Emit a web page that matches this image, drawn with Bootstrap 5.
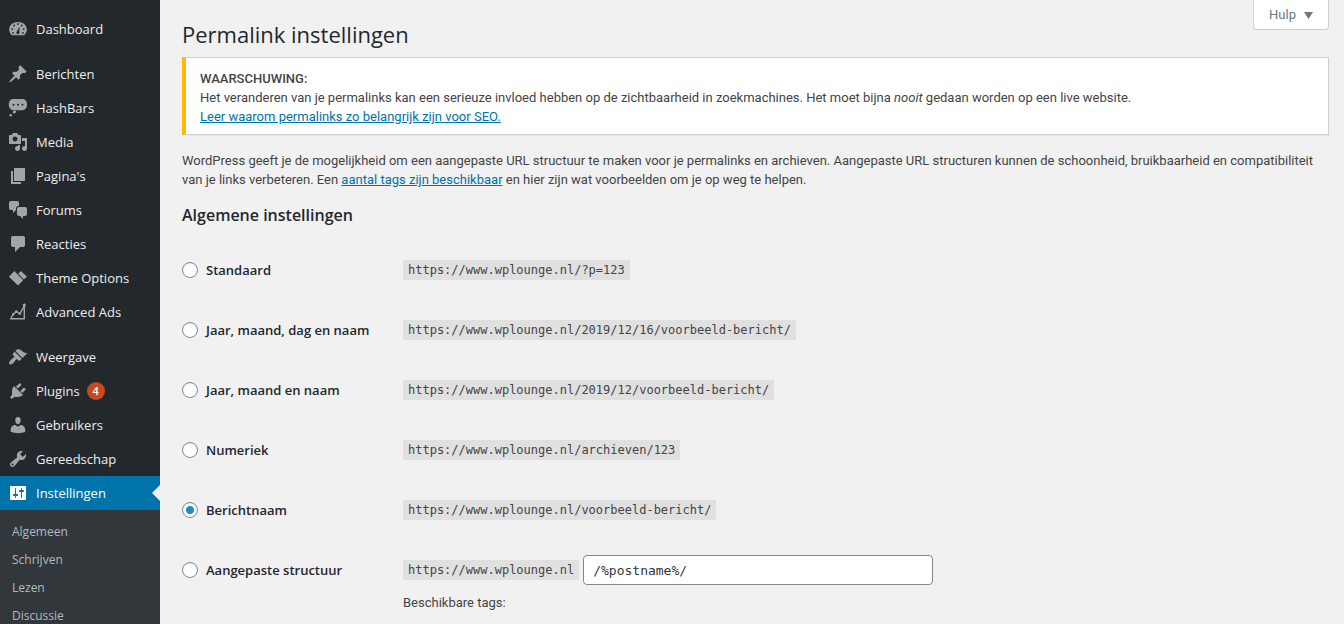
<!DOCTYPE html>
<html lang="nl">
<head>
<meta charset="utf-8">
<meta name="viewport" content="width=device-width, initial-scale=1">
<title>Permalink instellingen</title>
<link href="https://cdn.jsdelivr.net/npm/bootstrap@5.3.0/dist/css/bootstrap.min.css" rel="stylesheet">
<style>
  body { background: #f1f1f1; color: #444; font: 400 13px/19px Roboto, "Open Sans", sans-serif; }
  a { color: #0073aa; }
  .page-shell { height: 100vh; overflow: hidden; }

  /* Admin menu */
  .admin-menu { width: 160px; flex: none; background: #23282d; padding-top: 12px; font-family: "Open Sans", sans-serif; }
  .admin-menu .nav-link { display: flex; align-items: center; gap: 8px; height: 34px; padding: 0 8px; color: #eee; font-size: 13px; line-height: 18px; }
  .admin-menu svg { width: 20px; height: 20px; flex: none; fill: #a0a5aa; }
  .admin-menu .group-start { margin-top: 11px; }
  .admin-menu .nav-link.active { position: relative; background: #0073aa; color: #fff; }
  .admin-menu .active svg { fill: #fff; }
  .admin-menu .active::after { content: ""; position: absolute; right: 0; top: 9px; border: 8px solid transparent; border-right-color: #f1f1f1; border-left: 0; }
  .update-count { background: #ca4a1f; color: #fff; width: 18px; height: 18px; padding: 0; font: 600 11px/18px "Open Sans", sans-serif; margin-left: -1px; }
  .sub-menu { background: #32373c; padding: 8px 0 7px; }
  .admin-menu .sub-menu .nav-link { height: 28px; padding: 0 12px; color: #b4b9be; font-size: 12px; }

  /* Content */
  .admin-content { padding: 0 15px 0 22px; min-width: 0; }
  .help-toggle { background: #fff; border: 1px solid #ccd0d4; border-top: 0; border-radius: 0 0 4px 4px; color: #72777c; height: 30px; padding: 0 15px; }
  .help-toggle svg { width: 9px; height: 8px; fill: #72777c; }
  h1 { font: 400 22px/30px "Open Sans", sans-serif; color: #23282d; padding-top: 19px; }
  h2 { font: 600 16px/22px "Open Sans", sans-serif; color: #23282d; margin: 15px 0 14px; }
  .warning-notice { background: #fff; border: 1px solid #ccd0d4; border-left: 4px solid #ffb900; box-shadow: 0 1px 1px rgba(0,0,0,.04); padding: 11px 14px 8px; margin: 8px 0 16px; }
  .setting-row { min-height: 60px; }
  .setting-name { width: 221px; flex: none; padding-top: 20px; }
  .setting-name label { font: 600 13px/20px "Open Sans", sans-serif; color: #23282d; }
  .setting-name .form-check-input { width: 16px; height: 16px; margin: 2px 0 0; border-color: #7e8993; background-color: #fff; box-shadow: inset 0 1px 2px rgba(0,0,0,.1); }
  .setting-name .form-check-input:checked { background: #fff radial-gradient(circle, #1e8cbe 3.5px, transparent 4.5px); }
  .setting-value { padding-top: 20px; }
  .url-code { background: #e0e0e0; color: #444; font: 12px/19px "DejaVu Sans Mono", monospace; padding: 1px 5px 0; }
  .custom-value { padding-top: 15px; }
  .custom-value input { width: 350px; height: 30px; padding: 0 9px; color: #32373c; border: 1px solid #7e8993; border-radius: 4px; font: 13px/28px "DejaVu Sans Mono", monospace; }
</style>
</head>
<body>
<div class="page-shell d-flex">
  <nav class="admin-menu" aria-label="Hoofdmenu">
    <div class="nav flex-column flex-nowrap">
      <a class="nav-link" href="#"><svg viewBox="0 0 20 20"><path fill-rule="evenodd" d="M3.800 16.200h12.400c1.500-1.500 2.600-3.300 2.600-5.700C18.800 6 14.900 2.900 10 2.900S1.200 6 1.200 10.500c0 2.400 1.100 4.200 2.600 5.700zM10 4.100a.9.9 0 1 1 0 1.800.9.9 0 0 1 0-1.800zM6.200 5.600a.9.9 0 1 1 0 1.800.9.9 0 0 1 0-1.800zm7.600 0a.9.9 0 1 1 0 1.800.9.9 0 0 1 0-1.800zM4.300 9.200a.9.9 0 1 1 0 1.800.9.9 0 0 1 0-1.800zm11.400 0a.9.9 0 1 1 0 1.800.9.9 0 0 1 0-1.800zM11.700 7.600l-.4 5a1.600 1.600 0 1 1-2-.6zM5 12.900a.9.9 0 1 1 0 1.800.9.9 0 0 1 0-1.800zm10 0a.9.9 0 1 1 0 1.800.9.9 0 0 1 0-1.800z"/></svg>Dashboard</a>
      <a class="nav-link group-start" href="#"><svg viewBox="0 0 20 20"><path d="M10.440 3.020l1.820-1.820 6.360 6.350-1.830 1.820c-1.050-.68-2.480-.57-3.410.36l-.75.75c-.92.93-1.040 2.350-.35 3.410l-1.830 1.820-2.410-2.410-2.800 2.790c-.42.42-3.380 2.710-3.800 2.290s1.860-3.390 2.280-3.810l2.790-2.790L4.100 9.360l1.830-1.820c1.050.69 2.480.57 3.400-.36l.75-.75c.93-.92 1.050-2.350.36-3.410z"/></svg>Berichten</a>
      <a class="nav-link" href="#"><svg viewBox="0 0 20 20"><path fill-rule="evenodd" d="M5.500 1h8.800C17.200 1 19 3.200 19 6.500s-1.800 5.700-4.700 5.700H5.500C2.600 12.200.8 9.800.8 6.500S2.600 1 5.500 1zm0 4.800a1 1 0 1 0 0 2 1 1 0 0 0 0-2zm4.500 0a1 1 0 1 0 0 2 1 1 0 0 0 0-2zm4.500 0a1 1 0 1 0 0 2 1 1 0 0 0 0-2z"/><path d="M4.800 14.500c0-1.300 1.300-2.300 2.800-1.800.7.500.6 1.300.1 1.800-.8 1.200-2.900 1.500-2.900 0z"/><circle cx="2.700" cy="17.300" r="1.300"/></svg>HashBars</a>
      <a class="nav-link" href="#"><svg viewBox="0 0 20 20"><path d="M13 11V4c0-.55-.45-1-1-1h-1.670L9 1H5L3.670 3H2c-.55 0-1 .45-1 1v7c0 .55.45 1 1 1h10c.55 0 1-.45 1-1zM7 4.500c1.380 0 2.500 1.120 2.500 2.500S8.380 9.500 7 9.500 4.500 8.380 4.500 7 5.620 4.500 7 4.500zM14 6h5v10.500c0 1.380-1.120 2.500-2.500 2.500S14 17.880 14 16.500s1.120-2.500 2.500-2.500c.17 0 .34.02.5.05V9h-3V6zm-4 8.050V13h2v3.500c0 1.380-1.120 2.500-2.500 2.500S7 17.880 7 16.500 8.120 14 9.500 14c.17 0 .34.02.5.05z"/></svg>Media</a>
      <a class="nav-link" href="#"><svg viewBox="0 0 20 20"><path d="M6 15V2h11v13H6zm-1 1h8v2H3V5h2v11z"/></svg>Pagina's</a>
      <a class="nav-link" href="#"><svg viewBox="0 0 20 20"><path d="M11 6h-.82C9.070 6 8 7.200 8 8.160V10l-3 3v-3H3c-1.100 0-2-.9-2-2V3c0-1.100.9-2 2-2h6c1.100 0 2 .9 2 2v3zm0 1h6c1.100 0 2 .9 2 2v5c0 1.100-.9 2-2 2h-2v3l-3-3h-1c-1.100 0-2-.9-2-2V9c0-1.100.9-2 2-2z"/></svg>Forums</a>
      <a class="nav-link" href="#"><svg viewBox="0 0 20 20"><path d="M5 2h10c1.100 0 2 .9 2 2v7c0 1.100-.9 2-2 2h-3l-5 5v-5H5c-1.100 0-2-.9-2-2V4c0-1.100.9-2 2-2z"/></svg>Reacties</a>
      <a class="nav-link" href="#"><svg viewBox="0 0 20 20"><path d="M1 8.800L6.400 3l8.700 9.200-5.100 5.300z"/><path d="M10.300 5.800l2.600-2.800L19 8.700l-3.200 2.900z"/></svg>Theme Options</a>
      <a class="nav-link" href="#"><svg viewBox="0 0 20 20"><path fill="none" stroke="#a0a5aa" stroke-width="1.400" d="M5 12.500l3.300-3.200 3.500 2.600L16.300 4v12.800H2.800L5.200 12"/><circle cx="16.300" cy="3" r="1.600"/><circle cx="8.300" cy="9.600" r="1.300"/><circle cx="11.800" cy="11.800" r="1.200"/><circle cx="5.200" cy="12.200" r="1.200"/></svg>Advanced Ads</a>
      <a class="nav-link group-start" href="#"><svg viewBox="0 0 20 20"><path d="M14.480 11.060L7.410 3.990l1.500-1.500c.5-.56 2.300-.47 3.510.32 1.210.8 1.430 1.280 2.910 2.100 1.180.64 2.450 1.260 4.450.85zm-.71.71L6.700 4.700 4.930 6.470c-.39.39-.39 1.020 0 1.410l1.060 1.060c.39.39.39 1.030 0 1.420-.6.6-1.430 1.110-2.210 1.690-.35.26-.7.53-1.010.84C1.430 14.230.4 16.080 1.400 17.070c.99 1 2.840-.03 4.180-1.360.31-.31.58-.66.85-1.020.57-.78 1.080-1.610 1.690-2.210.39-.39 1.020-.39 1.410 0l1.060 1.060c.39.39 1.020.39 1.410 0z"/></svg>Weergave</a>
      <a class="nav-link" href="#"><svg viewBox="0 0 20 20"><path d="M13.110 4.360L9.870 7.600 8 5.730l3.240-3.240c.35-.34 1.050-.2 1.560.32.52.51.66 1.210.31 1.550zm-8 1.770l.91-1.120 9.010 9.010-1.190.84c-.71.71-2.630 1.160-3.820 1.160H6.140L4.900 17.260c-.59.59-1.540.59-2.120 0-.59-.58-.59-1.530 0-2.120l1.240-1.240v-3.880c0-1.130.4-3.190 1.090-3.890zm7.260 3.970l3.240-3.240c.34-.35 1.040-.21 1.550.31.52.51.66 1.210.31 1.550l-3.240 3.250z"/></svg>Plugins <span class="badge rounded-circle update-count">4</span></a>
      <a class="nav-link" href="#"><svg viewBox="0 0 20 20"><path d="M10 9.250c-2.270 0-2.730-3.440-2.730-3.440C7 4.020 7.820 2 9.970 2c2.160 0 2.980 2.020 2.710 3.810 0 0-.41 3.440-2.680 3.440zm0 2.570L12.720 10c2.390 0 4.520 2.330 4.520 4.530v2.490s-3.650 1.130-7.240 1.130c-3.650 0-7.240-1.130-7.240-1.130v-2.490c0-2.250 1.940-4.480 4.470-4.480z"/></svg>Gebruikers</a>
      <a class="nav-link" href="#"><svg viewBox="0 0 20 20"><path d="M16.680 9.770c-1.340 1.340-3.300 1.670-4.950.99l-5.410 6.520c-.99.99-2.590.99-3.580 0s-.99-2.590 0-3.570l6.520-5.420c-.68-1.650-.35-3.610.99-4.950 1.280-1.280 3.120-1.620 4.720-1.060l-2.890 2.890 2.820 2.820 2.860-2.870c.53 1.580.18 3.390-1.080 4.650zM3.810 16.210c.4.39 1.040.39 1.430 0 .4-.4.4-1.040 0-1.430-.39-.4-1.030-.4-1.430 0-.39.39-.39 1.030 0 1.430z"/></svg>Gereedschap</a>
      <a class="nav-link active" href="#" aria-current="page"><svg viewBox="0 0 20 20"><path d="M18 16V4c0-.55-.45-1-1-1H3c-.55 0-1 .45-1 1v12c0 .55.45 1 1 1h14c.55 0 1-.45 1-1zM8 11h1c.55 0 1 .45 1 1s-.45 1-1 1H8v1.500c0 .28-.22.5-.5.5s-.5-.22-.5-.5V13H6c-.55 0-1-.45-1-1s.45-1 1-1h1V5.500c0-.28.22-.5.5-.5s.5.22.5.5V11zm5-2h-1c-.55 0-1-.45-1-1s.45-1 1-1h1V5.500c0-.28.22-.5.5-.5s.5.22.5.5V7h1c.55 0 1 .45 1 1s-.45 1-1 1h-1v5.500c0 .28-.22.5-.5.5s-.5-.22-.5-.5V9z"/></svg>Instellingen</a>
    </div>
    <div class="nav flex-column flex-nowrap sub-menu">
      <a class="nav-link" href="#">Algemeen</a>
      <a class="nav-link" href="#">Schrijven</a>
      <a class="nav-link" href="#">Lezen</a>
      <a class="nav-link" href="#">Discussie</a>
    </div>
  </nav>

  <main class="admin-content flex-grow-1">
    <header class="d-flex justify-content-between align-items-start">
      <h1 class="mb-0">Permalink instellingen</h1>
      <button type="button" class="help-toggle d-flex align-items-center gap-2">Hulp <svg viewBox="0 0 9 8"><path d="M0 1h9L4.500 8z"/></svg></button>
    </header>

    <div class="warning-notice">
      <strong class="fw-medium d-block">WAARSCHUWING:</strong>
      Het veranderen van je permalinks kan een serieuze invloed hebben op de zichtbaarheid in zoekmachines. Het moet bijna <em>nooit</em> gedaan worden op een live website.<br>
      <a href="#">Leer waarom permalinks zo belangrijk zijn voor SEO.</a>
    </div>

    <p class="mb-0">WordPress geeft je de mogelijkheid om een aangepaste URL structuur te maken voor je permalinks en archieven. Aangepaste URL structuren kunnen de schoonheid, bruikbaarheid en compatibiliteit van je links verbeteren. Een <a href="#">aantal tags zijn beschikbaar</a> en hier zijn wat voorbeelden om je op weg te helpen.</p>

    <h2>Algemene instellingen</h2>

    <form>
      <div class="setting-row d-flex">
        <div class="setting-name d-flex align-items-start gap-2"><input class="form-check-input" type="radio" name="structure" id="s1"><label for="s1">Standaard</label></div>
        <div class="setting-value d-flex align-items-start"><code class="url-code">https://www.wplounge.nl/?p=123</code></div>
      </div>
      <div class="setting-row d-flex">
        <div class="setting-name d-flex align-items-start gap-2"><input class="form-check-input" type="radio" name="structure" id="s2"><label for="s2">Jaar, maand, dag en naam</label></div>
        <div class="setting-value d-flex align-items-start"><code class="url-code">https://www.wplounge.nl/2019/12/16/voorbeeld-bericht/</code></div>
      </div>
      <div class="setting-row d-flex">
        <div class="setting-name d-flex align-items-start gap-2"><input class="form-check-input" type="radio" name="structure" id="s3"><label for="s3">Jaar, maand en naam</label></div>
        <div class="setting-value d-flex align-items-start"><code class="url-code">https://www.wplounge.nl/2019/12/voorbeeld-bericht/</code></div>
      </div>
      <div class="setting-row d-flex">
        <div class="setting-name d-flex align-items-start gap-2"><input class="form-check-input" type="radio" name="structure" id="s4"><label for="s4">Numeriek</label></div>
        <div class="setting-value d-flex align-items-start"><code class="url-code">https://www.wplounge.nl/archieven/123</code></div>
      </div>
      <div class="setting-row d-flex">
        <div class="setting-name d-flex align-items-start gap-2"><input class="form-check-input" type="radio" name="structure" id="s5" checked><label for="s5">Berichtnaam</label></div>
        <div class="setting-value d-flex align-items-start"><code class="url-code">https://www.wplounge.nl/voorbeeld-bericht/</code></div>
      </div>
      <div class="setting-row d-flex">
        <div class="setting-name d-flex align-items-start gap-2"><input class="form-check-input" type="radio" name="structure" id="s6"><label for="s6">Aangepaste structuur</label></div>
        <div class="custom-value">
          <div class="d-flex align-items-center gap-1"><code class="url-code">https://www.wplounge.nl</code><input type="text" value="/%postname%/" aria-label="Aangepaste structuur"></div>
          <div class="pt-2">Beschikbare tags:</div>
        </div>
      </div>
    </form>
  </main>
</div>
<script src="https://cdn.jsdelivr.net/npm/bootstrap@5.3.0/dist/js/bootstrap.bundle.min.js"></script>
</body>
</html>
